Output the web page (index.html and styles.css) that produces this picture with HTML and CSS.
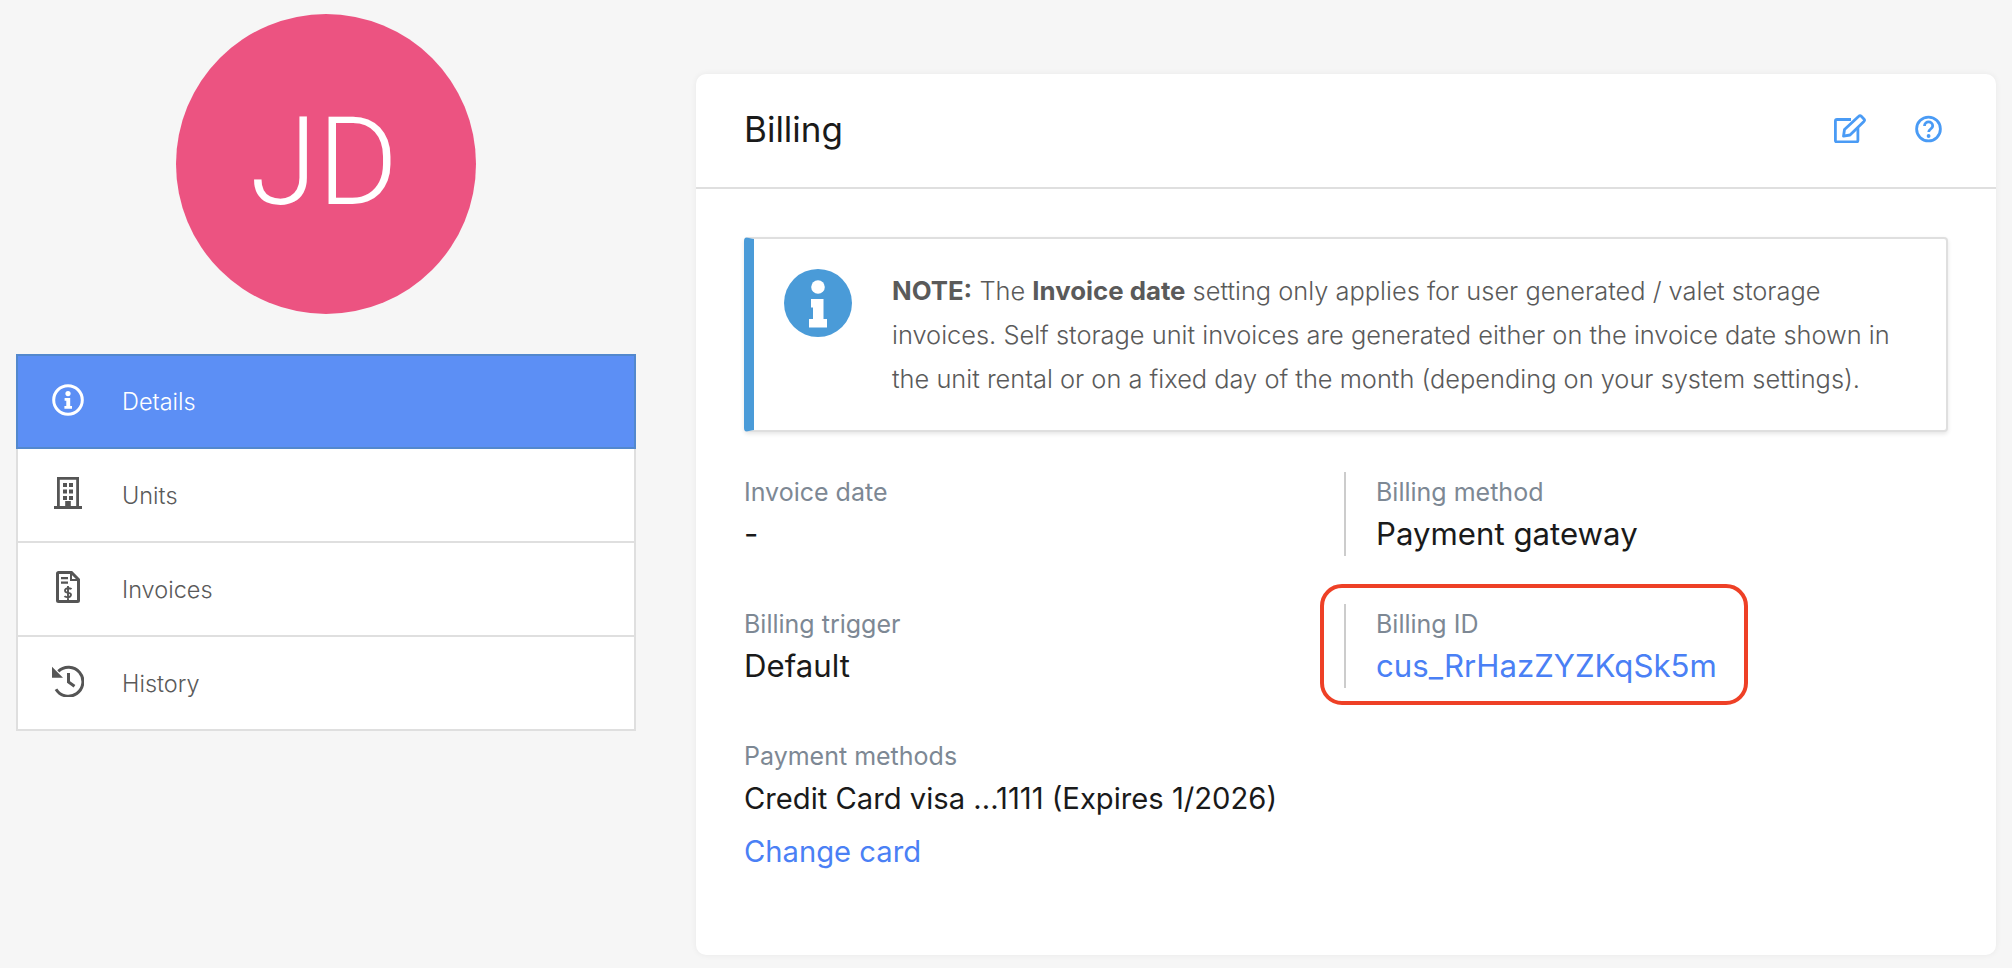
FILE: index.html
```html
<!DOCTYPE html>
<html lang="en">
<head>
<meta charset="utf-8">
<title>Billing</title>
<link rel="stylesheet" href="styles.css">
</head>
<body>
<div class="layout">
  <aside class="sidebar">
    <div class="avatar">JD</div>
    <nav class="menu">
      <a class="menu-item active">
        <span class="menu-icon"><svg width="32" height="32" viewBox="0 0 32 32"><circle cx="16" cy="16" r="14.3" fill="none" stroke="#fff" stroke-width="3"/><circle cx="16" cy="9.6" r="2.6" fill="#fff"/><path d="M12.6 14h5.6v8h1.8v2.8h-7.6V22h1.9v-5.2h-1.700z" fill="#fff"/></svg></span>
        <span>Details</span>
      </a>
      <a class="menu-item">
        <span class="menu-icon"><svg width="28" height="32" viewBox="0 0 28 32"><path d="M3 0h22v29h3v3H0v-3h3zM5.800 2.800V29h5.400v-5h5.600v5h5.400V2.800z" fill="#555" fill-rule="evenodd"/><path d="M9 6h4v4H9zM15 6h4v4h-4zM9 12.500h4v4H9zM15 12.500h4v4h-4zM9 19h4v4H9zM15 19h4v4h-4z" fill="#555"/></svg></span>
        <span>Units</span>
      </a>
      <a class="menu-item">
        <span class="menu-icon"><svg width="24" height="32" viewBox="0 0 24 32"><path d="M2.500 1.500h13l7 7v21a1 1 0 0 1-1 1h-19a1 1 0 0 1-1-1v-27a1 1 0 0 1 1-1z" fill="none" stroke="#555" stroke-width="3"/><path d="M15 1v8h8" fill="none" stroke="#555" stroke-width="2"/><path d="M5 6h7v2.200H5zM5 10.500h7v2.200H5z" fill="#555"/><path d="M15.500 18.200c-.8-1-4-1.400-5.500-.4-1.600 1.100-1.200 3 .5 3.500l3 .8c1.800.5 2 2.500.5 3.500-1.500 1-4.700.6-5.500-.4M12 15v14" fill="none" stroke="#555" stroke-width="1.900"/></svg></span>
        <span>Invoices</span>
      </a>
      <a class="menu-item">
        <span class="menu-icon"><svg width="32" height="32" viewBox="0 0 32 32"><path d="M6.300 6.300A14.500 14.500 0 1 1 4 24.200" fill="none" stroke="#555" stroke-width="3"/><path d="M0 1.800v11h11z" fill="#555"/><path d="M16.500 8v9l6 4.200" fill="none" stroke="#555" stroke-width="3"/></svg></span>
        <span>History</span>
      </a>
    </nav>
  </aside>
  <main class="card">
    <header class="card-header">
      <h1 class="card-title">Billing</h1>
      <div class="card-actions">
        <svg width="32" height="29" viewBox="0 0 32 29"><path d="M17 5.500H3a1.600 1.600 0 0 0-1.600 1.600v19.300A1.600 1.600 0 0 0 3 28h19.300a1.600 1.600 0 0 0 1.600-1.600V14" fill="none" stroke="#4a9bf5" stroke-width="2.800"/><path d="M10.500 15.500 24.800 2.300a1.800 1.800 0 0 1 2.500 0l2.600 2.600a1.800 1.800 0 0 1 0 2.500L16 21l-6.500 1.200z" fill="none" stroke="#4a9bf5" stroke-width="2.800" stroke-linejoin="round"/></svg>
        <svg width="27" height="28" viewBox="0 0 27 28"><circle cx="13.500" cy="14" r="11.900" fill="none" stroke="#4a9bf5" stroke-width="2.800"/><path d="M9.500 11c0-5.400 8.200-5.400 8.200 0 0 3-4 3-4 6" fill="none" stroke="#4a9bf5" stroke-width="2.800"/><circle cx="13.600" cy="21" r="1.900" fill="#4a9bf5"/></svg>
      </div>
    </header>
    <div class="card-body">
      <section class="note">
        <svg class="note-icon" width="68" height="68" viewBox="0 0 68 68"><circle cx="34" cy="34" r="34" fill="#4a9bd8"/><circle cx="34" cy="18" r="6.800" fill="#fff"/><path d="M27 30h12.500v20h3.500v8.500H25V50h4V38.500h-2z" fill="#fff"/></svg>
        <p class="note-text"><strong>NOTE:</strong> The <strong>Invoice date</strong> setting only applies for user generated / valet storage invoices. Self storage unit invoices are generated either on the invoice date shown in the unit rental or on a fixed day of the month (depending on your system settings).</p>
      </section>
      <div class="fields">
        <div class="field">
          <div class="field-label">Invoice date</div>
          <div class="field-value">-</div>
        </div>
        <div class="field field-ruled">
          <div class="field-label">Billing method</div>
          <div class="field-value">Payment gateway</div>
        </div>
        <div class="field">
          <div class="field-label">Billing trigger</div>
          <div class="field-value">Default</div>
        </div>
        <div class="field field-ruled">
          <span class="highlight"></span>
          <div class="field-label">Billing ID</div>
          <a class="field-value link">cus_RrHazZYZKqSk5m</a>
        </div>
        <div class="field field-wide">
          <div class="field-label">Payment methods</div>
          <div class="field-value field-value-small">Credit Card visa ...1111 (Expires 1/2026)</div>
          <a class="change-card link">Change card</a>
        </div>
      </div>
    </div>
  </main>
</div>
</body>
</html>
```

FILE: styles.css
```css
* { box-sizing: border-box; }
html, body { margin: 0; height: 100%; }
body {
  background: #f6f6f6;
  font-family: Inter, "Liberation Sans", sans-serif;
  overflow: hidden;
}
.layout {
  display: flex;
  gap: 60px;
  padding-left: 16px;
  height: 968px;
}
.sidebar { width: 620px; flex: none; }
.avatar {
  width: 300px;
  height: 300px;
  margin: 14px auto 40px;
  padding-bottom: 4px;
  padding-right: 4px;
  border-radius: 50%;
  background: #ec5381;
  color: #fff;
  display: flex;
  align-items: center;
  justify-content: center;
  font-family: Roboto, sans-serif;
  font-weight: 300;
  font-size: 123px;
}
.menu { display: flex; flex-direction: column; }
.menu-item {
  display: flex;
  align-items: center;
  height: 94px;
  background: #fff;
  border: 2px solid #dfdfdf;
  border-top-width: 0;
  color: #5a5a5a;
  font-weight: 300;
  font-size: 23.5px;
  padding-left: 30px;
}
.menu-item.active {
  height: 95px;
  background: #5c8ff5;
  border: 2px solid #5388cd;
  color: #fff;
}
.menu-icon {
  display: flex;
  justify-content: center;
  width: 40px;
  margin-right: 34px;
  margin-top: -4px;
}
.menu-icon svg { display: block; }

.card {
  width: 1300px;
  height: 881px;
  margin-top: 74px;
  background: #fff;
  border-radius: 10px;
  box-shadow: 0 0 6px rgba(0, 0, 0, .06);
}
.card-header {
  height: 115px;
  border-bottom: 2px solid #dfdfdf;
  padding: 0 54px 4px 48px;
  display: flex;
  align-items: center;
  justify-content: space-between;
}
.card-title {
  margin: 0;
  font-size: 35px;
  font-weight: 400;
  color: #1a1a1a;
}
.card-actions { display: flex; align-items: center; gap: 49px; }
.card-actions svg { display: block; }

.card-body { padding: 48px; }
.note {
  display: flex;
  gap: 40px;
  height: 195px;
  background: #fff;
  border: 2px solid #dfdfdf;
  border-left: 10px solid #4a9bd8;
  border-radius: 4px;
  box-shadow: 0 2px 4px rgba(0, 0, 0, .1);
  padding: 30px 40px 0 30px;
}
.note-icon { flex: none; }
.note-text {
  margin: 0;
  font-size: 25.4px;
  font-weight: 300;
  line-height: 44px;
  color: #5a5a5a;
}
.note-text strong { font-size: 25.8px; font-weight: 700; }

.fields {
  display: grid;
  grid-template-columns: 600px 1fr;
  row-gap: 48px;
  margin-top: 40px;
}
.field { min-height: 84px; position: relative; }
.field-ruled {
  border-left: 2px solid #ccc;
  padding-left: 30px;
}
.field-wide { grid-column: 1 / -1; }
.field-label {
  font-size: 25px;
  line-height: 41px;
  color: #7d8894;
  font-weight: 400;
}
.field-value {
  display: block;
  font-size: 31.2px;
  line-height: 43px;
  color: #1a1a1a;
}
.field-value-small { font-size: 29.2px; }
.link { color: #4a80f5; text-decoration: none; }
.change-card {
  display: block;
  margin-top: 10px;
  font-size: 29.2px;
  line-height: 44px;
}
.highlight {
  position: absolute;
  left: -26px;
  top: -20px;
  width: 428px;
  height: 121px;
  border: 4px solid #ee4026;
  border-radius: 22px;
}
```
